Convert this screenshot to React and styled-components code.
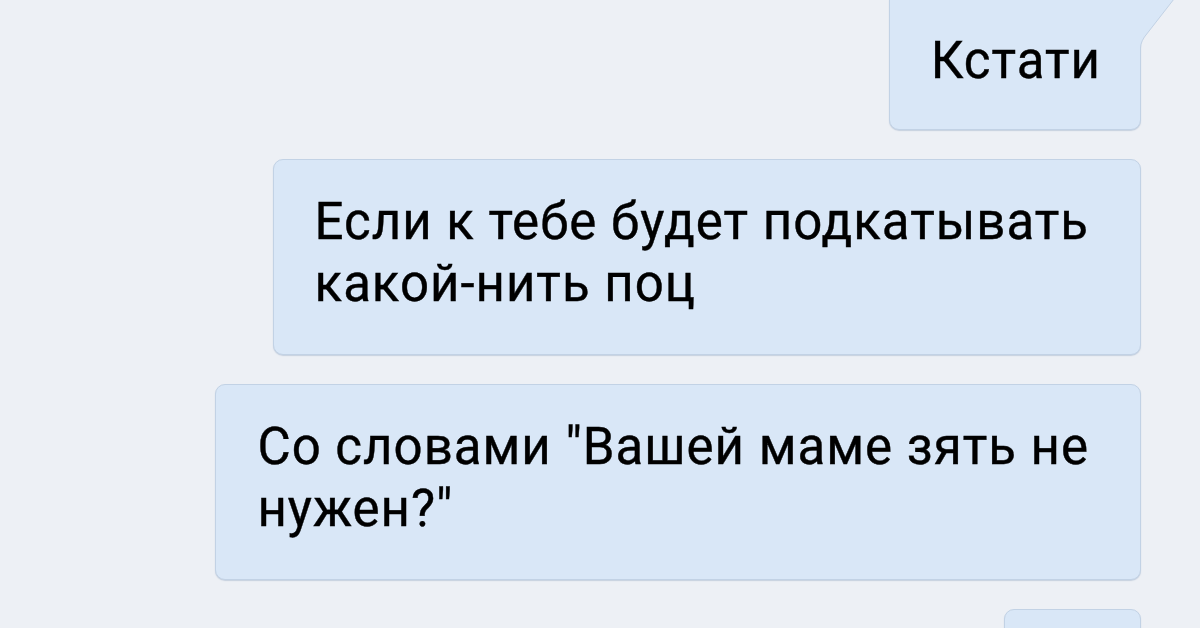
import React from "react";
import styled, { createGlobalStyle } from "styled-components";

const messages = [
  { id: 1, lines: ["Кстати"], tail: true },
  { id: 2, lines: ["Если к тебе будет подкатывать", "какой-нить поц"] },
  { id: 3, lines: ["Со словами \"Вашей маме зять не", "нужен?\""] },
  { id: 4, lines: ["\u00a0"], width: 137 },
];

function App() {
  return (
    <>
      <GlobalStyle />
      <Chat>
        {messages.map((msg) => (
          <Bubble
            key={msg.id}
            $tail={msg.tail}
            $wrapped={msg.lines.length > 1}
            $width={msg.width}
          >
            {msg.lines.map((line, i) => (
              <React.Fragment key={i}>
                {i > 0 && <br />}
                {line}
              </React.Fragment>
            ))}
            {msg.tail && (
              <Tail width="44" height="64" viewBox="0 0 44 64">
                <path
                  d="M0 0 L41 0 L7.5 43 Q0.5 51 0.5 58 L0.5 64 L0 64 Z"
                  fill="#d9e7f7"
                />
                <path
                  d="M41 0 L7.5 43 Q0.5 51 0.5 58 L0.5 64"
                  fill="none"
                  stroke="#c2d2e5"
                  strokeWidth="1"
                />
              </Tail>
            )}
          </Bubble>
        ))}
      </Chat>
    </>
  );
}

const GlobalStyle = createGlobalStyle`
  html, body {
    margin: 0;
    height: 628px;
    overflow: hidden;
    background: #edf0f5;
  }
`;

const Chat = styled.div`
  display: flex;
  flex-direction: column;
  align-items: flex-end;
  gap: 29px;
  margin-top: -10px;
  padding-right: 59px;
  font-family: Roboto, "Noto Sans", sans-serif;
`;

const Bubble = styled.div`
  position: relative;
  width: ${(p) => (p.$width ? `${p.$width}px` : "fit-content")};
  box-sizing: border-box;
  padding: ${(p) => (p.$tail ? "39px" : "31px")}
    ${(p) => (p.$wrapped ? "51px" : "39px")}
    ${(p) => (p.$tail ? "37px" : "39px")} 41px;
  background: #d9e7f7;
  border: 1px solid #c2d2e5;
  border-radius: ${(p) => (p.$tail ? "10px 0 10px 10px" : "10px")};
  box-shadow: 0 1px 1px rgba(150, 170, 195, 0.45);
  color: #000;
  font-size: 51px;
  letter-spacing: 1px;
  line-height: 62px;
  white-space: nowrap;
  -webkit-text-stroke: 0.4px #000;
`;

const Tail = styled.svg`
  position: absolute;
  left: 100%;
  top: -1px;
  overflow: visible;
`;

export default App;
